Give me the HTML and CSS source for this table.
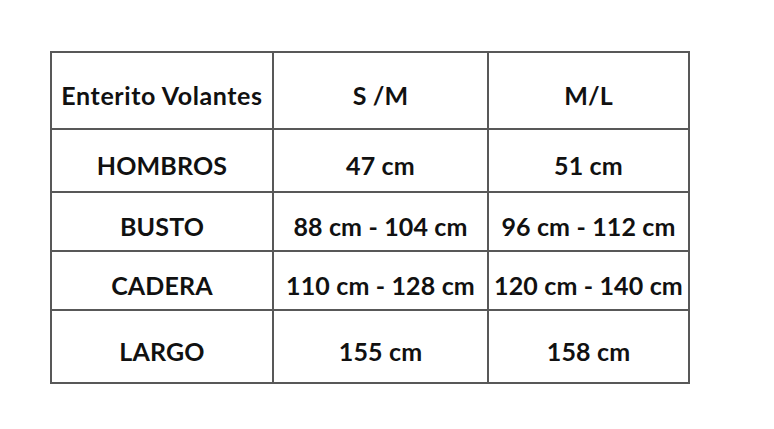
FILE: index.html
```html
<!DOCTYPE html>
<html lang="es">
<head>
<meta charset="utf-8">
<link rel="stylesheet" href="styles.css">
</head>
<body>
<div class="size-table">
  <div class="cell title">Enterito Volantes</div>
  <div class="cell">S /M</div>
  <div class="cell">M/L</div>
  <div class="cell">HOMBROS</div>
  <div class="cell">47 cm</div>
  <div class="cell">51 cm</div>
  <div class="cell">BUSTO</div>
  <div class="cell">88 cm - 104 cm</div>
  <div class="cell">96 cm - 112 cm</div>
  <div class="cell">CADERA</div>
  <div class="cell">110 cm - 128 cm</div>
  <div class="cell">120 cm - 140 cm</div>
  <div class="cell">LARGO</div>
  <div class="cell">155 cm</div>
  <div class="cell">158 cm</div>
</div>
</body>
</html>
```
FILE: styles.css
```css
html, body {
  margin: 0;
  background: #ffffff;
}
body {
  padding: 51px 0 0 50px;
  font-family: Lato, "Open Sans", "DejaVu Sans", sans-serif;
}
.size-table {
  display: grid;
  width: max-content;
  grid-template-columns: 220px 213px 199px;
  grid-template-rows: 75px 61px 57px 57px 71px;
  gap: 2px;
  padding: 2px;
  background: #585858;
}
.cell {
  background: #ffffff;
  display: flex;
  align-items: center;
  justify-content: center;
  padding-top: 8px;
  box-sizing: border-box;
  font-weight: 700;
  font-size: 25px;
  letter-spacing: 0.15px;
  color: #111111;
  white-space: nowrap;
}
.cell.title {
  letter-spacing: 0.6px;
}
```
